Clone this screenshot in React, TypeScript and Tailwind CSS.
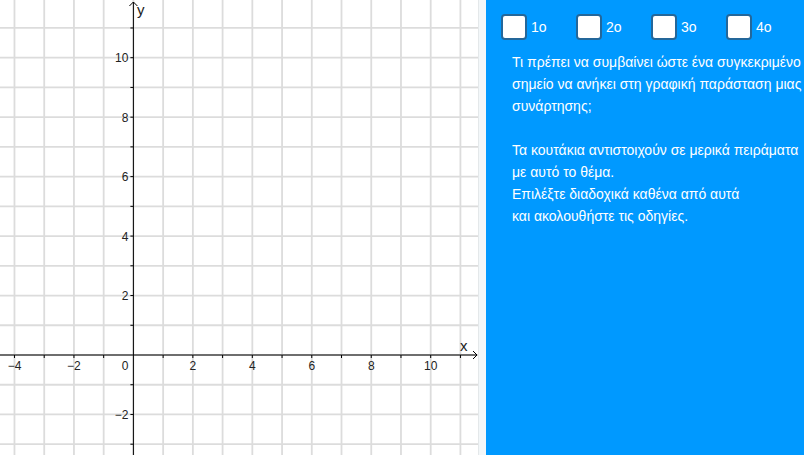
const UNIT = 29.73
const OX = 133.4
const OY = 355
const W = 478
const H = 455

const xs = Array.from({ length: 16 }, (_, i) => i - 4).filter((k) => OX + k * UNIT < W - 4)
const ys = Array.from({ length: 16 }, (_, i) => i - 3).filter((k) => OY - k * UNIT > 4)

function fmt(n: number) {
  return n < 0 ? `\u2212${-n}` : `${n}`
}

function Graph() {
  return (
    <svg width={W} height={H} className="block shrink-0 bg-white">
      {xs.map((k) => (
        <line
          key={`gx${k}`}
          x1={OX + k * UNIT}
          x2={OX + k * UNIT}
          y1={0}
          y2={H}
          stroke="#dcdcdc"
          strokeWidth={1.8}
        />
      ))}
      {ys.map((k) => (
        <line
          key={`gy${k}`}
          x1={0}
          x2={W}
          y1={OY - k * UNIT}
          y2={OY - k * UNIT}
          stroke="#dcdcdc"
          strokeWidth={1.8}
        />
      ))}

      {/* axes */}
      <line x1={0} x2={W - 1} y1={OY} y2={OY} stroke="#000" strokeWidth={1} />
      <line x1={OX} x2={OX} y1={2} y2={H} stroke="#000" strokeWidth={1} />
      <polyline points={`${W - 5},${OY - 4} ${W - 1},${OY} ${W - 5},${OY + 4}`} fill="none" stroke="#000" strokeWidth={1} />
      <polyline points={`${OX - 4},${6} ${OX},${2} ${OX + 4},${6}`} fill="none" stroke="#000" strokeWidth={1} />

      {/* ticks */}
      {xs.filter((k) => k !== 0).map((k) => (
        <line key={`tx${k}`} x1={OX + k * UNIT} x2={OX + k * UNIT} y1={OY} y2={OY + 3} stroke="#000" />
      ))}
      {ys.filter((k) => k !== 0).map((k) => (
        <line key={`ty${k}`} x1={OX - 3} x2={OX} y1={OY - k * UNIT} y2={OY - k * UNIT} stroke="#000" />
      ))}

      <g fontFamily="'Liberation Sans', Arial, sans-serif" fontSize={12} fill="#222">
        {xs.filter((k) => k !== 0 && k % 2 === 0).map((k) => (
          <text key={`lx${k}`} x={OX + k * UNIT} y={OY + 15} textAnchor="middle">
            {fmt(k)}
          </text>
        ))}
        {ys.filter((k) => k !== 0 && k % 2 === 0).map((k) => (
          <text key={`ly${k}`} x={OX - 5} y={OY - k * UNIT + 4.5} textAnchor="end">
            {fmt(k)}
          </text>
        ))}
        <text x={OX - 5} y={OY + 15} textAnchor="end">0</text>
      </g>
      <g fontFamily="'Liberation Sans', Arial, sans-serif" fontSize={15} fill="#222">
        <text x={460} y={351}>x</text>
        <text x={137} y={15}>y</text>
      </g>
    </svg>
  )
}

const boxes = ["1o", "2o", "3o", "4o"]

const lines = [
  "Τι πρέπει να συμβαίνει ώστε ένα συγκεκριμένο",
  "σημείο να ανήκει στη γραφική παράσταση μιας",
  "συνάρτησης;",
  "",
  "Τα κουτάκια αντιστοιχούν σε μερικά πειράματα",
  "με αυτό το θέμα.",
  "Επιλέξτε διαδοχικά καθένα από αυτά",
  "και ακολουθήστε τις οδηγίες.",
]

export default function App() {
  return (
    <div className="flex h-[455px] w-[804px] overflow-hidden font-['Liberation_Sans',Arial,sans-serif]">
      <Graph />
      <div className="w-[8px] shrink-0 border-l border-[#e4e8ea] bg-[#f3f7f9]" />
      <div className="min-w-0 flex-1 overflow-hidden bg-[#0099ff] pt-[14px]">
        <div className="flex pl-[15px]">
          {boxes.map((b) => (
            <label key={b} className="flex w-[75px] shrink-0 items-center gap-[4px]">
              <span className="h-[26px] w-[26px] rounded-[4px] border-2 border-[#24679a] bg-white" />
              <span className="text-[14px] text-white">{b}</span>
            </label>
          ))}
        </div>
        <div className="mt-[11px] whitespace-nowrap pl-[26px] text-[14px] leading-[22px] text-white">
          {lines.map((l, i) => (
            <div key={i} className="h-[22px]">
              {l}
            </div>
          ))}
        </div>
      </div>
    </div>
  )
}
